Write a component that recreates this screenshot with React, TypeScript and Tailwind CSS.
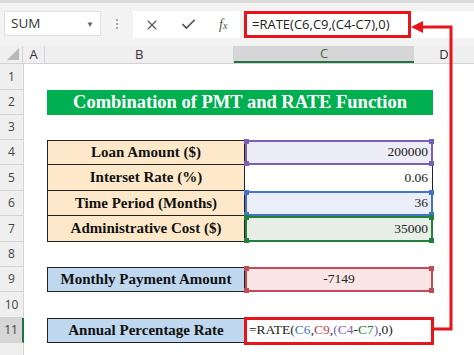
import React from 'react';
import { X, Check } from 'lucide-react';

const rowHeights = [26, 25, 25, 25, 26, 25, 26, 25, 25, 26, 25, 25];

const Handle = ({ className }: { className: string }) => (
  <span className={`absolute w-[5px] h-[5px] ${className}`} />
);

const Handles = ({ color }: { color: string }) => (
  <>
    <Handle className={`-left-[3px] -top-[3px] ${color}`} />
    <Handle className={`-right-[3px] -top-[3px] ${color}`} />
    <Handle className={`-left-[3px] -bottom-[3px] ${color}`} />
    <Handle className={`-right-[3px] -bottom-[3px] ${color}`} />
  </>
);

const Label = ({ text, bg, top }: { text: string; bg: string; top?: boolean }) => (
  <div
    className={`w-[198px] h-full flex items-center justify-center border-x border-b border-[#222] ${top ? 'border-t' : ''} ${bg} font-bold text-[15px] text-[#111]`}
  >
    {text}
  </div>
);

export default function App() {
  const serif = { fontFamily: '"Liberation Serif", "Times New Roman", serif' };

  const cellB = (r: number) => {
    if (r === 4) return <Label text="Loan Amount ($)" bg="bg-[#fde9c9]" top />;
    if (r === 5) return <Label text="Interset Rate (%)" bg="bg-[#fde9c9]" />;
    if (r === 6) return <Label text="Time Period (Months)" bg="bg-[#fde9c9]" />;
    if (r === 7) return <Label text="Administrative Cost ($)" bg="bg-[#fde9c9]" />;
    if (r === 9) return <Label text="Monthly Payment Amount" bg="bg-[#c0d8ef]" top />;
    if (r === 11) return <Label text="Annual Percentage Rate" bg="bg-[#c0d8ef]" top />;
    return <div className="w-[198px] h-full" />;
  };

  const cellC = (r: number) => {
    if (r === 4)
      return (
        <div className="relative w-[188px] h-full border-2 border-[#7b5fb4] bg-[#ececf6] flex items-center justify-end pr-[3px] text-[13.5px]">
          200000
          <Handles color="bg-[#7b5fb4]" />
        </div>
      );
    if (r === 5)
      return (
        <div className="w-[188px] h-full border-r border-[#222] bg-white flex items-center justify-end pr-[4px] text-[13.5px]">
          0.06
        </div>
      );
    if (r === 6)
      return (
        <div className="relative w-[188px] h-full border-2 border-[#4472c4] bg-[#eaeef8] flex items-center justify-end pr-[3px] text-[13.5px]">
          36
          <Handles color="bg-[#4472c4]" />
        </div>
      );
    if (r === 7)
      return (
        <div className="relative w-[188px] h-full border-2 border-[#23803a] bg-[#e7efe6] flex items-center justify-end pr-[3px] text-[13.5px]">
          35000
          <Handles color="bg-[#23803a]" />
        </div>
      );
    if (r === 9)
      return (
        <div className="relative w-[188px] h-full border-2 border-[#c04a55] bg-[#f9e5e5] flex items-center justify-center text-[13.5px]">
          -7149
          <Handles color="bg-[#c04a55]" />
        </div>
      );
    if (r === 11)
      return (
        <div className="w-[188px] h-full bg-white flex items-center pl-[4px] text-[13.5px] text-[#222]">
          =RATE(<span className="text-[#4472c4]">C6</span>,<span className="text-[#c0404d]">C9</span>,
          <span className="text-[#7b5fb4]">(C4</span>-<span className="text-[#23803a]">C7</span>
          <span className="text-[#7b5fb4]">)</span>,0)
        </div>
      );
    return <div className="w-[188px] h-full" />;
  };

  return (
    <div
      className="relative w-[474px] h-[355px] overflow-hidden bg-white text-[#222]"
      style={{ fontFamily: '"Open Sans", "Liberation Sans", sans-serif' }}
    >
      {/* formula bar */}
      <div className="h-[3px] bg-[#dadada]" />
      <div className="h-[43px] bg-[#f3f3f3] flex items-start pt-[8px]">
        <div className="ml-[4px] w-[97px] h-[25px] bg-white border border-[#e0e0e0] flex items-center justify-between pl-[6px] pr-[6px] text-[13.5px] text-[#333]">
          <span>SUM</span>
          <span className="text-[8px] text-[#666]">▼</span>
        </div>
        <div className="w-[32px] h-[25px] flex flex-col items-center justify-center gap-[2px]">
          <span className="w-[2px] h-[2px] bg-[#aaa]" />
          <span className="w-[2px] h-[2px] bg-[#aaa]" />
          <span className="w-[2px] h-[2px] bg-[#aaa]" />
        </div>
        <div className="w-[107px] h-[27px] bg-white flex items-center text-[#555]">
          <X className="ml-[11px] w-[16px] h-[16px]" strokeWidth={1.6} />
          <Check className="ml-[20px] w-[17px] h-[17px]" strokeWidth={2.4} />
          <span className="ml-[22px] italic text-[14px] text-[#555]" style={serif}>
            f<span className="text-[10px]">x</span>
          </span>
        </div>
        <div className="ml-[4px] flex-1 h-[27px] bg-white flex items-center">
          <div className="w-[167px] h-[27px] border-[3px] border-[#e8141b] flex items-center pl-[5px] text-[13px] text-[#222]">
            =RATE(C6,C9,(C4-C7),0)
          </div>
        </div>
      </div>

      {/* column headers */}
      <div className="flex h-[18px] bg-[#efefef] border-b border-[#d4d4d4] text-[13px] text-[#333]">
        <div className="w-[24px] h-full relative border-r border-[#d4d4d4]">
          <svg className="absolute right-[3px] bottom-[3px]" width="12" height="12" viewBox="0 0 12 12">
            <polygon points="12,0 12,12 0,12" fill="#b8b8b8" />
          </svg>
        </div>
        <div className="w-[23px] flex items-center justify-center border-r border-[#d4d4d4]">A</div>
        <div className="w-[198px] flex items-center justify-center border-r border-[#d4d4d4]">B</div>
        <div className="w-[188px] flex items-center justify-center bg-[#d6d6d6] border-b-2 border-[#217346] text-[#3d6b4f]">C</div>
        <div className="w-[60px] shrink-0 flex items-center justify-center">D</div>
      </div>

      {/* rows */}
      <div style={serif}>
        {rowHeights.map((h, i) => {
          const r = i + 1;
          return (
            <div key={r} className="flex" style={{ height: h }}>
              <div
                className={`w-[24px] shrink-0 flex items-center justify-center border-b border-[#d4d4d4] text-[12px] ${
                  r === 11
                    ? 'bg-[#d6d6d6] border-r-2 border-r-[#217346] text-[#444]'
                    : 'bg-[#efefef] border-r border-r-[#d4d4d4] text-[#444]'
                }`}
                style={{ fontFamily: '"Open Sans", "Liberation Sans", sans-serif' }}
              >
                {r < 12 ? r : ''}
              </div>
              <div className="w-[23px] shrink-0" />
              {r === 2 ? (
                <div className="w-[386px] h-full bg-[#00b050] flex items-center justify-center text-white font-bold text-[18.5px]">
                  Combination of PMT and RATE Function
                </div>
              ) : (
                <>
                  {cellB(r)}
                  {cellC(r)}
                </>
              )}
            </div>
          );
        })}
      </div>

      {/* annotation */}
      <div className="absolute left-[244px] top-[317px] w-[190px] h-[28px] border-[3px] border-[#e8141b]" />
      <svg className="absolute left-0 top-0" width="474" height="355" viewBox="0 0 474 355">
        <polyline points="434,329 451,329 451,27 420,27" fill="none" stroke="#e8141b" strokeWidth="3" />
        <polygon points="411,27 423,21 423,33" fill="#e8141b" />
      </svg>
    </div>
  );
}
